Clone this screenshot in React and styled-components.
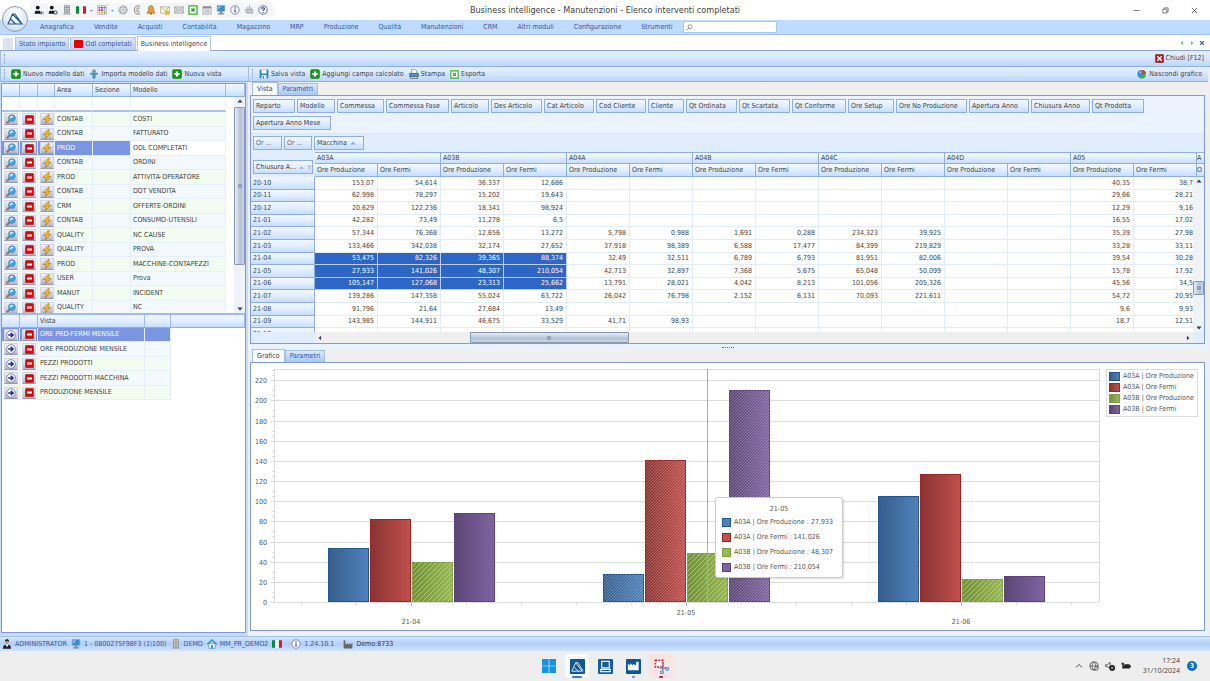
import { useState } from "react";
import styled, { createGlobalStyle, css } from "styled-components";

const GlobalStyle = createGlobalStyle`
  * {
    box-sizing: border-box;
  }

  body {
    margin: 0;
    background: #fff;
    color: #3f3f3f;
    font-family: "DejaVu Sans Condensed", "DejaVu Sans", "Noto Sans", sans-serif;
    font-size: 7px;
    line-height: 9px;
  }

  button, input {
    font: inherit;
    color: inherit;
    margin: 0;
    padding: 0;
    border: 0;
    background: none;
    outline: none;
  }

  svg {
    display: block;
    flex: none;
  }
`;

const headerGradient = "linear-gradient(#f3f8ff, #e3efff 45%, #c6deff)";
const barGradient = "linear-gradient(#e6f0ff, #d9e8ff 45%, #bad6fd)";

/* ---------- data ---------- */

const menuItems = [
  "Anagrafica", "Vendite", "Acquisti", "Contabilità", "Magazzino", "MRP", "Produzione",
  "Qualità", "Manutenzioni", "CRM", "Altri moduli", "Configurazione", "Strumenti",
];

const quickIcons = [
  "userDots", "userGear", "server", "flag", "caret", "palette", "caret", "gear", "coins", "bell",
  "mailStar", "mail", "excel", "calendar", "monitor", "info", "hand", "help",
];

const models = [
  ["CONTAB", "COSTI"],
  ["CONTAB", "FATTURATO"],
  ["PROD", "ODL COMPLETATI"],
  ["CONTAB", "ORDINI"],
  ["PROD", "ATTIVITA-OPERATORE"],
  ["CONTAB", "DDT VENDITA"],
  ["CRM", "OFFERTE-ORDINI"],
  ["CONTAB", "CONSUMO-UTENSILI"],
  ["QUALITY", "NC CAUSE"],
  ["QUALITY", "PROVA"],
  ["PROD", "MACCHINE-CONTAPEZZI"],
  ["USER", "Prova"],
  ["MANUT", "INCIDENT"],
  ["QUALITY", "NC"],
];

const views = [
  "ORE PRD-FERMI MENSILE",
  "ORE PRODUZIONE MENSILE",
  "PEZZI PRODOTTI",
  "PEZZI PRODOTTI MACCHINA",
  "PRODUZIONE MENSILE",
];

const fields = [
  ["Reparto", 42], ["Modello", 38], ["Commessa", 47], ["Commessa Fase", 63], ["Articolo", 38],
  ["Des Articolo", 51], ["Cat Articolo", 50], ["Cod Cliente", 50], ["Cliente", 36],
  ["Qt Ordinata", 51], ["Qt Scartata", 51], ["Qt Conforme", 54], ["Ore Setup", 46],
  ["Ore No Produzione", 71], ["Apertura Anno", 60], ["Chiusura Anno", 59], ["Qt Prodotta", 52],
  ["Apertura Anno Mese", 78],
];

const machines = ["A03A", "A03B", "A04A", "A04B", "A04C", "A04D", "A05"];

const pivot = [
  ["20-10", "153,07", "54,614", "36,337", "12,686", "", "", "", "", "", "", "", "", "40,35", "38,7"],
  ["20-11", "62,998", "78,297", "15,202", "19,643", "", "", "", "", "", "", "", "", "29,66", "28,21"],
  ["20-12", "20,629", "122,236", "18,341", "98,924", "", "", "", "", "", "", "", "", "12,29", "9,16"],
  ["21-01", "42,282", "73,49", "11,278", "6,5", "", "", "", "", "", "", "", "", "16,55", "17,02"],
  ["21-02", "57,344", "76,368", "12,656", "13,272", "5,798", "0,988", "1,691", "0,288", "234,323", "39,925", "", "", "35,39", "27,98"],
  ["21-03", "133,466", "342,038", "32,174", "27,652", "37,918", "98,389", "6,588", "17,477", "84,399", "219,829", "", "", "33,28", "33,11"],
  ["21-04", "53,475", "82,326", "39,365", "88,374", "32,49", "32,511", "6,789", "6,793", "81,951", "82,006", "", "", "39,54", "30,28"],
  ["21-05", "27,933", "141,026", "48,307", "210,054", "42,713", "32,897", "7,368", "5,675", "65,048", "50,099", "", "", "15,78", "17,92"],
  ["21-06", "105,147", "127,068", "23,313", "25,662", "13,791", "28,021", "4,042", "8,213", "101,056", "205,326", "", "", "45,56", "34,5"],
  ["21-07", "139,286", "147,358", "55,024", "63,722", "26,042", "76,798", "2,152", "6,131", "70,093", "221,611", "", "", "54,72", "20,95"],
  ["21-08", "91,796", "21,64", "27,684", "13,49", "", "", "", "", "", "", "", "", "9,6", "9,93"],
  ["21-09", "143,985", "144,911", "46,675", "33,529", "41,71", "98,93", "", "", "", "", "", "", "18,7", "12,51"],
  ["21-10", "", "", "", "", "", "", "", "", "", "", "", "", "", ""],
];

const selectedMonths = ["21-04", "21-05", "21-06"];

const series = [
  { id: "blue", label: "A03A | Ore Produzione", from: "#365f8a", to: "#4f81bd", edge: "#1f5796", values: [53.475, 27.933, 105.147] },
  { id: "red", label: "A03A | Ore Fermi", from: "#8a3432", to: "#c0504d", edge: "#9c2422", values: [82.326, 141.026, 127.068] },
  { id: "green", label: "A03B | Ore Produzione", from: "#71903a", to: "#98b955", edge: "#7f9f43", values: [39.365, 48.307, 23.313] },
  { id: "purple", label: "A03B | Ore Fermi", from: "#5b4675", to: "#8064a2", edge: "#5c4480", values: [88.374, 210.054, 25.662] },
];

/* ---------- icons ---------- */

const person = (
  <>
    <circle cx="6" cy="4" r="3" fill="#111" />
    <path d="M1 14c0-4 2-5 3.500-5.200L6 10.500l1.500-1.700C9 9 11 10 11 14z" fill="#111" />
  </>
);

const shapes = {
  userDots: <>{person}<path d="M12 10v5M14.500 11v4" stroke="#333" strokeWidth="1.500" strokeDasharray="2 1" /></>,
  userGear: <>{person}<circle cx="12" cy="12" r="2.600" fill="#fff" stroke="#333" strokeWidth="1.600" /></>,
  user: (
    <>
      <circle cx="8" cy="4.500" r="3.200" fill="#c98f5d" />
      <path d="M4.600 4.500C4.500 1 6 .5 8 .5s3.500.5 3.400 4L10.500 3h-5z" fill="#222" />
      <path d="M1.500 15.500c0-5 2-6 4-6.500l2.500 3 2.500-3c2 .5 4 1.500 4 6.500z" fill="#222" />
      <path d="M6.500 9h3L8 13z" fill="#fff" />
    </>
  ),
  server: (
    <>
      <path d="M4 1h8v12H4z" fill="#e5e8e2" stroke="#777" />
      <path d="M4 4h8M4 7h8M4 10h8M8 1v12M2 14.500h12" stroke="#777" />
    </>
  ),
  flag: (
    <>
      <path d="M0 2h5v12H0z" fill="#008c45" />
      <path d="M5 2h6v12H5z" fill="#fff" />
      <path d="M11 2h5v12h-5z" fill="#cd212a" />
    </>
  ),
  caret: <path d="M3 6h10l-5 6z" fill="#6c8fc4" />,
  palette: (
    <>
      <path d="M1 1h14v14H1z" fill="#fff" stroke="#9a9ac0" />
      <path d="M2.500 4h3M2.500 8h3" stroke="#e0362c" strokeWidth="2.800" />
      <path d="M6.500 4h3M10.500 4h3M6.500 8h3" stroke="#5a49c8" strokeWidth="2.800" />
      <path d="M2.500 12h3M6.500 12h3M10.500 8h3" stroke="#ecaa27" strokeWidth="2.800" />
      <path d="M10.500 12h3" stroke="#3aa53a" strokeWidth="2.800" />
    </>
  ),
  gear: (
    <>
      <circle cx="8" cy="8" r="6.500" fill="none" stroke="#999" strokeWidth="2" strokeDasharray="2.200 1.200" />
      <circle cx="8" cy="8" r="5" fill="#f4f4f4" stroke="#888" />
      <circle cx="8" cy="8" r="2" fill="#fff" stroke="#888" />
    </>
  ),
  coins: (
    <>
      <path d="M4 1h9v14H4z" fill="#e6e6df" />
      <path d="M13 1.500H7L4 5v6l3 3.500h6M12 5H9L7.500 8 9 11h3" fill="none" stroke="#8c8c80" strokeWidth="1.400" />
    </>
  ),
  bell: (
    <>
      <path d="M8 1c3 0 4 3 4 6 0 3 2 4 2.500 6h-13C2 11 4 10 4 7c0-3 1-6 4-6z" fill="#e0a13c" stroke="#9a6518" />
      <circle cx="8" cy="14" r="1.600" fill="#9a6518" />
    </>
  ),
  mail: (
    <>
      <path d="M1 3h14v10H1z" fill="#dcdcdc" stroke="#999" />
      <path d="M1 3l7 6 7-6M1 13l5-5M15 13l-5-5" fill="none" stroke="#999" />
    </>
  ),
  mailStar: (
    <>
      <path d="M1 3h14v10H1z" fill="#fbf6d8" stroke="#a39b6a" />
      <path d="M1 3l7 6 7-6" fill="none" stroke="#a39b6a" />
      <path d="M11.500 8l1 2.500 3 .5-2 2 .5 3-2.500-1.500L9 16l.5-3-2-2 3-.5z" fill="#f0c22d" stroke="#b8870c" strokeWidth=".5" />
    </>
  ),
  excel: (
    <>
      <path d="M1.500 1.500h13v13h-13z" fill="#fff" stroke="#33b51e" strokeWidth="2" />
      <path d="M5.500 5.500l5 5M10.500 5.500l-5 5" stroke="#1f9a14" strokeWidth="2" />
    </>
  ),
  calendar: (
    <>
      <path d="M1.500 2.500h13v12h-13z" fill="#efefef" stroke="#8f8f8f" />
      <path d="M1.500 2.500h13v3h-13z" fill="#8f8f8f" />
      <path d="M4 8h8M4 11h8M6 7v6M10 7v6" stroke="#aaa" />
    </>
  ),
  monitor: (
    <>
      <path d="M2 1h12v9H2z" fill="#2a8fd8" stroke="#8899a8" />
      <path d="M3.500 2.500h5l-5 5z" fill="#8fd0f7" />
      <path d="M6 10h4v3H6zM3 13h10v2H3z" fill="#7f8b96" />
    </>
  ),
  info: (
    <>
      <circle cx="8" cy="8" r="6.800" fill="#f4f6fb" stroke="#77809c" strokeWidth="1.300" />
      <path d="M8 7v5M8 3.500v2" stroke="#3b4894" strokeWidth="2" />
    </>
  ),
  help: (
    <>
      <circle cx="8" cy="8" r="6.800" fill="#f4f6fb" stroke="#555d78" strokeWidth="1.300" />
      <path d="M5.800 6.200C6 3.500 10.300 3.700 10.200 6.200 10.200 7.800 8 7.800 8 9.600M8 11v1.800" fill="none" stroke="#2d3f9c" strokeWidth="1.700" />
    </>
  ),
  hand: (
    <>
      <path d="M2 7h12v6H4z" fill="#c9c9c9" stroke="#999" />
      <path d="M6 8V3M9 8V1M11.500 8V4" stroke="#aaa" strokeWidth="1.600" />
    </>
  ),
  plus: (
    <>
      <rect x="1" y="1" width="14" height="14" rx="2" fill="#12a012" stroke="#0c750c" />
      <path d="M8 4v8M4 8h8" stroke="#fff" strokeWidth="3" />
    </>
  ),
  importModel: (
    <>
      <circle cx="8" cy="3.500" r="3" fill="#7d98a8" />
      <path d="M2 6h12v3h-3.500v5L8 16l-2.500-2V9H2z" fill="#4f8fb0" />
    </>
  ),
  save: (
    <>
      <path d="M1 1h14v14H1z" fill="#2d87c4" />
      <path d="M4 1h8v6H4zM4 9.500h8V15H4z" fill="#f4f9fd" />
      <path d="M6 11h2v4H6z" fill="#2d87c4" />
    </>
  ),
  printer: (
    <>
      <path d="M4 1h6l2 2v4H4z" fill="#fff" stroke="#777" />
      <path d="M1 7h14v5H1z" fill="#3c97d6" stroke="#39485a" />
      <path d="M3 12h10l1 3H2z" fill="#cfd6dd" stroke="#39485a" />
    </>
  ),
  close: (
    <>
      <path d="M1 1h14v14H1z" fill="#b5161a" stroke="#7c0a0d" />
      <path d="M4 4l8 8M12 4l-8 8" stroke="#fff" strokeWidth="3" />
    </>
  ),
  pie: (
    <>
      <circle cx="7" cy="8" r="6.500" fill="#3c8fd6" />
      <path d="M8 8V1.500A6.500 6.500 0 0 1 14.500 8z" fill="#df3a24" />
      <path d="M8 9h6.500A6.500 6.500 0 0 1 4 14z" fill="#3cb62c" />
      <path d="M3 6l3-3 1 3z" fill="#b8dcf7" />
    </>
  ),
  lens: (
    <>
      <path d="M1.500 14.500l5-5" stroke="#8a6b52" strokeWidth="3" />
      <circle cx="9.500" cy="6.500" r="5.500" fill="#35a7ef" stroke="#4d7fae" />
      <path d="M6 5.500C7 2.500 10 2 12 3.500 12 6 8 5 7 8z" fill="#d9f2ff" />
    </>
  ),
  minus: (
    <>
      <rect x="1" y="1" width="14" height="14" rx="1" fill="#cc0f12" stroke="#8e0a0c" />
      <path d="M3.500 8h9" stroke="#fff" strokeWidth="3.500" />
    </>
  ),
  bolt: <path d="M10 .5L1.500 9H7l-2 6.500L14.500 7H9l3-5.500z" fill="#f8c323" stroke="#8f6412" strokeWidth=".9" />,
  arrow: (
    <>
      <circle cx="8" cy="8" r="7" fill="#f7f8ff" stroke="#6a7090" strokeWidth="1.200" />
      <path d="M3.500 8h7M7.500 4.500L11.500 8l-4 3.500" fill="none" stroke="#1c2a9c" strokeWidth="2.200" />
    </>
  ),
  house: (
    <>
      <path d="M3 7h10v8H3z" fill="#e6f4fb" stroke="#4889ac" />
      <path d="M.5 8.500L8 1.500l7.500 7" fill="none" stroke="#2a92cc" strokeWidth="2.200" />
      <path d="M6.500 10h3v5h-3z" fill="#2a92cc" />
    </>
  ),
  factory: <path d="M1 15V2h2.500l.6 7L8 6.500V9l3.500-2.500V9L15 6.500V15z" fill="#666" />,
  search: (
    <>
      <circle cx="9.500" cy="6" r="4.500" fill="none" stroke="#555" strokeWidth="1.300" />
      <path d="M6 9.500l-5 5" stroke="#555" strokeWidth="1.600" />
    </>
  ),
  minimize: <path d="M1 8h14" stroke="#444" strokeWidth="1.500" />,
  restore: <path d="M2 5h9v9H2zM5 5V2h9v9h-3" fill="none" stroke="#444" strokeWidth="1.500" />,
  cross: <path d="M2 2l12 12M14 2L2 14" stroke="#333" strokeWidth="1.600" />,
  crossBold: <path d="M3 3l10 10M13 3L3 13" stroke="#2f62a8" strokeWidth="3.500" />,
  left: <path d="M11 2v12L4 8z" fill="currentColor" />,
  right: <path d="M5 2v12l7-6z" fill="currentColor" />,
  up: <path d="M1 12h14L8 4z" fill="currentColor" />,
  down: <path d="M1 4h14l-7 8z" fill="currentColor" />,
  funnel: <path d="M2 2h12L9.500 8v6l-3-2V8z" fill="#c3cfdf" stroke="#7f8ea8" />,
  windows: <path d="M0 0h7.600v7.600H0zM8.400 0H16v7.600H8.400zM0 8.400h7.600V16H0zM8.400 8.400H16V16H8.400z" fill="#1494df" />,
  appLogo: (
    <>
      <rect width="16" height="16" rx="1" fill="#0f5796" />
      <path d="M2 13L6 4l7 9zM6 4h2.500L14 13M4.500 9L9 13" fill="none" stroke="#fff" strokeWidth=".9" />
    </>
  ),
  appScreen: (
    <>
      <rect width="16" height="16" rx="1" fill="#14609f" />
      <path d="M4 2.500h8v7H4z" fill="none" stroke="#fff" strokeWidth="1.200" />
      <path d="M3 11h10v2.500H3z" fill="none" stroke="#fff" strokeWidth="1.200" />
    </>
  ),
  appFactory: (
    <>
      <rect width="16" height="16" rx="1" fill="#0c5796" />
      <path d="M2 12V5l2.500 2V4.500L7.500 7V5l3 2L11 3h2.500v9z" fill="#fff" />
    </>
  ),
  snip: (
    <>
      <path d="M1.500 1.500h8v7h-8z" fill="#fff" stroke="#d2232a" strokeWidth="1.800" strokeDasharray="2 1.200" />
      <path d="M9.500 4v8M6 9.500h7" stroke="#7b8794" strokeWidth="1.600" />
      <circle cx="14" cy="10.500" r="1.500" fill="none" stroke="#2a8fd8" strokeWidth="1.200" />
      <circle cx="8.500" cy="14" r="1.500" fill="none" stroke="#2a8fd8" strokeWidth="1.200" />
    </>
  ),
  chevron: <path d="M2 11l6-6 6 6" fill="none" stroke="#333" strokeWidth="1.700" />,
  globe: (
    <>
      <circle cx="8" cy="8" r="6.500" fill="none" stroke="#333" strokeWidth="1.200" />
      <path d="M1.500 8h13M8 1.500C4 5 4 11 8 14.500M8 1.500c4 3.500 4 9.500 0 13" fill="none" stroke="#333" />
      <circle cx="12" cy="12" r="3" fill="#eee" stroke="#333" />
      <path d="M10 14l4-4" stroke="#333" />
    </>
  ),
  speaker: (
    <>
      <path d="M1 6h3l4-4v10L4 9H1z" fill="none" stroke="#333" strokeWidth="1.200" />
      <circle cx="11.500" cy="11" r="4.500" fill="#111" />
      <path d="M9.500 9l4 4M13.500 9l-4 4" stroke="#fff" strokeWidth="1.100" />
    </>
  ),
  battery: (
    <>
      <path d="M2 5h12v7H2zM14 7h2v3h-2z" fill="#222" />
      <path d="M0 3l4-1 2 4-4 2z" fill="#222" stroke="#eee" strokeWidth=".7" />
    </>
  ),
};

function Icon({ name, size = 10 }) {
  return (
    <svg width={size} height={size} viewBox="0 0 16 16" aria-hidden="true">
      {shapes[name]}
    </svg>
  );
}

/* ---------- window frame ---------- */

const Window = styled.div`
  display: flex;
  flex-direction: column;
  min-height: 100vh;
`;

const TitleBar = styled.header`
  position: relative;
  display: flex;
  align-items: center;
  height: 20px;
  padding: 0 12px 0 30px;
`;

const AppButton = styled.button`
  position: absolute;
  z-index: 2;
  left: 2px;
  top: 6px;
  display: flex;
  align-items: center;
  justify-content: center;
  width: 26px;
  height: 26px;
  border: 1px solid #8d9fb8;
  border-radius: 50%;
  background: radial-gradient(circle at 50% 30%, #fff, #dfe9f6 60%, #b4cbe8);
`;

const QuickBar = styled.div`
  display: flex;
  align-items: center;
  gap: 4px;
  height: 15px;
  padding: 0 7px 0 4px;
  border-radius: 0 8px 8px 0;
  background: #f3f6fb;
`;

const QuickButton = styled.button`
  width: ${(props) => (props.$narrow ? 3 : 10)}px;
  height: 10px;
  display: flex;
  align-items: center;
  justify-content: center;
`;

const Title = styled.h1`
  position: absolute;
  left: 0;
  right: 0;
  margin: 0;
  font-size: 9px;
  font-weight: 400;
  line-height: 20px;
  text-align: center;
  pointer-events: none;
`;

const WindowButtons = styled.div`
  display: flex;
  gap: 22px;
  margin-left: auto;
`;

const MenuBar = styled.nav`
  display: flex;
  align-items: center;
  height: 15px;
  padding-left: 30px;
  background: #bfdbff;
  border-bottom: 1px solid #a0c3f5;
  color: #34589f;
`;

const MenuButton = styled.button`
  padding: 0 10px;
  line-height: 14px;
`;

const SearchBox = styled.label`
  display: flex;
  align-items: center;
  width: 94px;
  height: 12px;
  padding-left: 2px;
  background: #fff;
  border: 1px solid #a9c8f0;

  input {
    width: 80px;
  }
`;

const PageTabs = styled.div`
  display: flex;
  align-items: flex-end;
  gap: 1px;
  height: 16px;
  padding: 0 5px 0 3px;
  border-bottom: 1px solid #8ba8d8;
`;

const PageTab = styled.button`
  display: flex;
  align-items: center;
  gap: 2px;
  height: ${(props) => (props.$active ? 15 : 13)}px;
  margin-bottom: ${(props) => (props.$active ? -1 : 0)}px;
  padding: 0 3px;
  border: 1px solid #b3c9e8;
  border-bottom: 0;
  background: ${(props) => (props.$active ? "#fff" : "linear-gradient(#dbe8fa, #b5cff5)")};
  color: ${(props) => (props.$active ? "#3f3f3f" : "#34589f")};
`;

const EmptyTab = styled.span`
  width: 10px;
  height: 12px;
  margin-right: 1px;
  background: #dfe4ec;
`;

const RedSquare = styled.i`
  width: 9px;
  height: 8px;
  border-radius: 1px;
  background: #e80000;
`;

const TabTools = styled.div`
  display: flex;
  align-self: center;
  gap: 4px;
  margin-left: auto;
  color: #8ba8d8;
`;

const Bar = styled.div`
  display: flex;
  align-items: center;
  gap: ${(props) => props.$gap || 6}px;
  height: ${(props) => (props.$tall ? 16 : 15)}px;
  padding: 0 6px 0 8px;
  background: ${barGradient};
  border-bottom: 1px solid #90b0e3;
  border-left: 1px solid #a5c0e8;
`;

const Grip = styled.i`
  width: 2px;
  height: 10px;
  margin-left: -5px;
  border-left: 1px dotted #7f9fd4;
`;

const ToolButton = styled.button`
  display: flex;
  align-items: center;
  gap: 2px;
  margin-left: ${(props) => (props.$end ? "auto" : 0)};
  white-space: nowrap;
`;

const Workspace = styled.main`
  display: flex;
  flex: 1;
  min-height: 0;
`;

/* ---------- left side ---------- */

const Side = styled.aside`
  display: flex;
  flex-direction: column;
  width: 248px;
  flex: none;
  background: #c7dcfa;
`;

const SidePanel = styled.section`
  display: flex;
  flex: 1;
  flex-direction: column;
  margin: 1px 2px 3px 1px;
  border: 1px solid #7d9cd3;
  background: #fff;
`;

const ModelPane = styled.div`
  height: 231px;
  overflow: hidden;
  border-bottom: 2px solid #9dbbe8;
`;

const PaneBody = styled.div`
  display: flex;
  justify-content: space-between;
  height: ${(props) => props.$height}px;
  overflow: hidden;
`;

const SideTable = styled.table`
  border-collapse: separate;
  border-spacing: 0;
  table-layout: fixed;
  width: ${(props) => props.$width};

  th {
    height: 13px;
    padding: 0 2px;
    text-align: left;
    font-weight: 400;
    background: ${headerGradient};
    border-right: 1px solid #9ebbe5;
    border-bottom: 1px solid #8eafe0;
  }

  td {
    padding: 0 2px;
    overflow: hidden;
    white-space: nowrap;
    border-right: 1px solid #e6f0fc;
    border-bottom: 1px solid #e6f0fc;
  }

  input {
    display: block;
    width: 100%;
  }
`;

const FilterRow = styled.tr`
  height: 15px;

  td {
    border-bottom: 2px solid #a9c4ec;
  }
`;

const SideRow = styled.tr`
  height: ${(props) => (props.$index % 2 ? 14 : 15)}px;
  background: ${(props) => (props.$green ? "#f3fcf1" : "#f4f9ff")};

  ${(props) =>
    props.$selected &&
    css`
      td {
        background: #7b96e0;
        color: #fff;
      }

      td:nth-child(6) {
        background: #fff;
        color: #3f3f3f;
      }
    `}
`;

const ActionCell = styled.td`
  && {
    padding: 0 0 0 2px;
  }
`;

const ActionButton = styled.button`
  display: flex;
  align-items: center;
  justify-content: center;
  width: 14px;
  height: 12px;
  background: linear-gradient(#f0f0f7, #d0d0df 60%, #b3b3c6);
  border: 1px solid #d4d4e2;
  border-bottom-color: #9a9ab0;
`;

/* ---------- scroll bars ---------- */

const VScroll = styled.div`
  display: flex;
  flex: none;
  flex-direction: column;
  align-items: center;
  justify-content: space-between;
  width: 11px;
  padding: 1px 0;
  background: #eff2f6;
  color: #2c3f66;
`;

const HScroll = styled.div`
  display: flex;
  align-items: center;
  justify-content: space-between;
  height: 11px;
  margin: 0 11px 0 64px;
  padding: 0 2px;
  background: #efefef;
  color: #2c3f66;
`;

const ScrollTrack = styled.div`
  flex: 1;
  display: flex;
  flex-direction: ${(props) => (props.$vertical ? "column" : "row")};
  align-self: stretch;
`;

const Thumb = styled.div`
  flex: 0 0 ${(props) => props.$size};
  margin: ${(props) => (props.$vertical ? `${props.$before} 0 0 0` : `0 0 0 ${props.$before}`)};
  display: flex;
  align-items: center;
  justify-content: center;
  border: 1px solid #8797b5;
  border-radius: 1px;
  background: linear-gradient(${(props) => (props.$vertical ? "to right" : "to bottom")}, #e7edf5, #b4c2d6 60%, #c9d6e8);

  &::after {
    content: "";
    width: 4px;
    height: 4px;
    background: #93a3bb;
  }
`;

/* ---------- right side ---------- */

const Content = styled.section`
  display: flex;
  flex: 1;
  flex-direction: column;
  min-width: 0;
  padding-right: 2px;
  background: #efefef;
`;

const Splitter = styled.div`
  display: flex;
  justify-content: center;
  height: 5px;
  padding-top: 3px;
  background: #e9f2ff;

  i {
    width: 12px;
    border-top: 1px dotted #4c6ba8;
  }
`;

const ViewTabs = styled.div`
  display: flex;
  align-items: flex-end;
  height: 13px;
  padding-left: 4px;
`;

const ViewTab = styled.button`
  height: ${(props) => (props.$active ? 13 : 12)}px;
  padding: 0 4px;
  border: 1px solid #a5bfe6;
  border-bottom: 0;
  background: ${(props) => (props.$active ? "#f7faff" : "linear-gradient(#dae7fa, #a9c8f5)")};
  color: ${(props) => (props.$active ? "#3f3f3f" : "#34589f")};
`;

const Panel = styled.div`
  display: flex;
  flex: ${(props) => (props.$grow ? 1 : "none")};
  flex-direction: column;
  margin: 0 3px 0 2px;
  border: 1px solid #7d9cd3;
  background: ${(props) => (props.$grow ? "#fff" : "#e0edff")};
`;

const FieldArea = styled.div`
  display: flex;
  flex-wrap: wrap;
  gap: 3px 2px;
  padding: 3px 2px;
  background: #ebf3ff;
  border-bottom: 1px solid #dce8f8;
`;

const Chip = styled.button`
  display: flex;
  align-items: center;
  gap: 3px;
  width: ${(props) => props.$width}px;
  height: 14px;
  padding: 0 2px;
  border: 1px solid #8eafe0;
  background: ${headerGradient};
  white-space: nowrap;
  color: ${(props) => (props.$muted ? "#666" : "inherit")};

  svg {
    color: #7fb0ee;
  }
`;

const AxisRow = styled.div`
  display: flex;
  gap: 2px;
  padding: 2px 2px;
`;

const PivotHead = styled.div`
  overflow: hidden;
`;

const PivotBody = styled.div`
  display: flex;
  height: 155px;

  > div:first-child {
    flex: 1;
    overflow: hidden;
  }
`;

const PivotTable = styled.table`
  table-layout: fixed;
  border-collapse: separate;
  border-spacing: 0;
  width: 100%;

  col {
    width: 63px;
  }

  col:first-child {
    width: 64px;
  }

  col:last-child {
    width: auto;
  }

  th {
    padding: 0 0 0 2px;
    text-align: left;
    font-weight: 400;
    background: ${headerGradient};
    border-right: 1px solid #8eafe0;
    border-bottom: 1px solid #8eafe0;
    white-space: nowrap;
  }

  thead th {
    height: 12px;
    border-top: 1px solid #8eafe0;
  }

  thead th:last-child {
    padding: 0;
    border-right: 0;
  }

  thead tr + tr th {
    height: 13px;
    border-top: 0;
  }

  thead th:first-child[rowspan] {
    padding: 8px 0 0 2px;
    border: 0;
    background: none;
    vertical-align: top;
  }

  tbody th {
    color: #3a4963;
  }

  td {
    padding: 0 3px 0 0;
    text-align: right;
    background: #fff;
    border-right: 1px solid #e1edfc;
    border-bottom: 1px solid #e1edfc;
  }
`;

const PivotRow = styled.tr`
  height: ${(props) => (props.$index % 5 === 1 || props.$index % 5 === 3 ? 12 : 13)}px;
`;

const ValueCell = styled.td`
  ${(props) =>
    props.$selected &&
    css`
      && {
        background: #2e66c6;
        color: #fff;
        border-color: #b9d0f3;
      }
    `}
`;

/* ---------- chart ---------- */

const ChartArea = styled.div`
  position: relative;
  display: flex;
  align-items: flex-start;
  flex: 1;
  color: #555;
`;

const ChartSvg = styled.svg`
  flex: 1;
  min-width: 0;
  height: auto;

  text {
    font-size: 7px;
    fill: #555;
  }
`;

const Legend = styled.ul`
  width: 92px;
  margin: 6px 6px 0 0;
  padding: 1px 2px;
  list-style: none;
  border: 1px solid #ddd;

  li {
    display: flex;
    align-items: center;
    gap: 3px;
    height: 11px;
    white-space: nowrap;
  }
`;

const Tooltip = styled.div`
  position: absolute;
  left: 464px;
  top: 134px;
  width: 128px;
  height: 81px;
  padding: 5px 6px;
  background: #fff;
  border: 1px solid #ccc;
  border-radius: 3px;
  box-shadow: 1px 1px 2px rgba(0, 0, 0, 0.15);

  h2 {
    margin: 0;
    font-size: 7px;
    font-weight: 400;
    line-height: 12px;
    text-align: center;
  }

  p {
    display: flex;
    align-items: center;
    gap: 3px;
    height: 15px;
    margin: 0;
    white-space: nowrap;
  }
`;

const Swatch = styled.i`
  width: ${(props) => (props.$wide ? 11 : 9)}px;
  height: ${(props) => (props.$wide ? 9 : 9)}px;
  flex: none;
  border: 1px solid ${(props) => props.$series.edge};
  background: ${(props) =>
    props.$wide ? `linear-gradient(to right, ${props.$series.from}, ${props.$series.to})` : props.$series.to};
`;

/* ---------- bottom ---------- */

const StatusBar = styled.footer`
  display: flex;
  align-items: center;
  gap: 4px;
  height: 15px;
  padding: 0 2px;
  border-top: 1px solid #a8bfe2;
  background: linear-gradient(#d4e5fc, #b1cff7 50%, #d2e3fb);
  color: #34589f;
`;

const StatusItem = styled.span`
  display: flex;
  align-items: center;
  gap: 3px;
  padding-right: ${(props) => (props.$wide ? 5 : 0)}px;
  color: ${(props) => (props.$dark ? "#333" : "inherit")};
`;

const TaskBar = styled.footer`
  position: relative;
  display: flex;
  align-items: center;
  justify-content: center;
  gap: 4px;
  height: 30px;
  background: #eeeeef;
`;

const TaskButton = styled.button`
  position: relative;
  display: flex;
  align-items: center;
  justify-content: center;
  width: 24px;
  height: 24px;
  border-radius: 2px;
  background: ${(props) => props.$tile || "none"};

  &::after {
    content: "";
    position: absolute;
    bottom: 0;
    width: ${(props) => props.$mark || 0}px;
    height: 2px;
    border-radius: 1px;
    background: ${(props) => props.$markColor};
  }
`;

const Tray = styled.div`
  position: absolute;
  right: 13px;
  display: flex;
  align-items: center;
  gap: 6px;
`;

const Clock = styled.time`
  margin: 0 1px 0 6px;
  text-align: right;
  font-family: "Open Sans", sans-serif;
  line-height: 10px;
`;

const Badge = styled.span`
  width: 10px;
  height: 10px;
  border-radius: 50%;
  background: #0a6ccf;
  color: #fff;
  font-weight: 700;
  line-height: 10px;
  text-align: center;
`;

/* ---------- components ---------- */

function ScrollV({ before, size }) {
  return (
    <VScroll>
      <Icon name="up" size={6} />
      <ScrollTrack $vertical>
        <Thumb $vertical $before={before} $size={size} />
      </ScrollTrack>
      <Icon name="down" size={6} />
    </VScroll>
  );
}

function Models() {
  const [selected, setSelected] = useState(2);

  return (
    <ModelPane>
      <SideTable $width="100%">
        <colgroup>
          <col width="18" />
          <col width="18" />
          <col width="17" />
          <col width="38" />
          <col width="38" />
          <col width="95" />
          <col />
        </colgroup>
        <thead>
          <tr>
            <th />
            <th />
            <th />
            <th>Area</th>
            <th>Sezione</th>
            <th>Modello</th>
            <th />
          </tr>
        </thead>
      </SideTable>
      <PaneBody $height={216}>
        <SideTable $width="224px">
          <colgroup>
            <col width="18" />
            <col width="18" />
            <col width="17" />
            <col width="38" />
            <col width="38" />
            <col width="95" />
          </colgroup>
          <tbody>
            <FilterRow>
              <td />
              <td />
              <td />
              <td><input aria-label="Filtro area" /></td>
              <td><input aria-label="Filtro sezione" /></td>
              <td><input aria-label="Filtro modello" /></td>
            </FilterRow>
            {models.map(([area, name], index) => (
              <SideRow
                key={name}
                $index={index}
                $green={index % 2 === 0}
                $selected={index === selected}
                onClick={() => setSelected(index)}
              >
                <ActionCell><ActionButton aria-label="Apri"><Icon name="lens" size={10} /></ActionButton></ActionCell>
                <ActionCell><ActionButton aria-label="Elimina"><Icon name="minus" size={9} /></ActionButton></ActionCell>
                <ActionCell><ActionButton aria-label="Esegui"><Icon name="bolt" size={10} /></ActionButton></ActionCell>
                <td>{area}</td>
                <td />
                <td>{name}</td>
              </SideRow>
            ))}
          </tbody>
        </SideTable>
        <ScrollV before="3px" size="158px" />
      </PaneBody>
    </ModelPane>
  );
}

function Views() {
  const [selected, setSelected] = useState(0);

  return (
    <>
      <SideTable $width="100%">
        <colgroup>
          <col width="18" />
          <col width="18" />
          <col width="107" />
          <col width="26" />
          <col />
        </colgroup>
        <thead>
          <tr>
            <th />
            <th />
            <th>Vista</th>
            <th />
            <th />
          </tr>
        </thead>
      </SideTable>
      <SideTable $width="169px">
        <colgroup>
          <col width="18" />
          <col width="18" />
          <col width="107" />
          <col width="26" />
        </colgroup>
        <tbody>
          {views.map((view, index) => (
            <SideRow
              key={view}
              $index={index + 1}
              $green={index > 0 && index % 2 === 0}
              $selected={index === selected}
              onClick={() => setSelected(index)}
            >
              <ActionCell><ActionButton aria-label="Apri vista"><Icon name="arrow" size={10} /></ActionButton></ActionCell>
              <ActionCell><ActionButton aria-label="Elimina vista"><Icon name="minus" size={9} /></ActionButton></ActionCell>
              <td>{view}</td>
              <td />
            </SideRow>
          ))}
        </tbody>
      </SideTable>
    </>
  );
}

function PivotColumns() {
  return (
    <colgroup>
      <col />
      {machines.map((machine) => [<col key={machine} />, <col key={machine + "f"} />])}
      <col />
    </colgroup>
  );
}

function Pivot() {
  return (
    <Panel>
      <FieldArea>
        {fields.map(([name, width]) => (
          <Chip key={name} $width={width}>{name}</Chip>
        ))}
      </FieldArea>
      <AxisRow>
        <Chip $width={29} $muted>Or ...</Chip>
        <Chip $width={28} $muted>Or ...</Chip>
        <Chip $width={50}>Macchina <Icon name="up" size={6} /></Chip>
      </AxisRow>
      <PivotHead>
        <PivotTable>
          <PivotColumns />
          <thead>
            <tr>
              <th rowSpan={2}>
                <Chip $width={60}>Chiusura A... <Icon name="up" size={5} /><Icon name="funnel" size={5} /></Chip>
              </th>
              {machines.map((machine) => (
                <th key={machine} colSpan={2}>{machine}</th>
              ))}
              <th>A</th>
            </tr>
            <tr>
              {machines.map((machine) => [
                <th key={machine}>Ore Produzione</th>,
                <th key={machine + "f"}>Ore Fermi</th>,
              ])}
              <th>O</th>
            </tr>
          </thead>
        </PivotTable>
      </PivotHead>
      <PivotBody>
        <div>
          <PivotTable>
            <PivotColumns />
            <tbody>
              {pivot.map(([month, ...values], index) => (
                <PivotRow key={month} $index={index}>
                  <th>{month}</th>
                  {values.map((value, i) => (
                    <ValueCell key={i} $selected={i < 4 && selectedMonths.includes(month)}>{value}</ValueCell>
                  ))}
                  <td />
                </PivotRow>
              ))}
            </tbody>
          </PivotTable>
        </div>
        <ScrollV before="97px" size="14px" />
      </PivotBody>
      <HScroll>
        <Icon name="left" size={6} />
        <ScrollTrack>
          <Thumb $before="17%" $size="159px" />
        </ScrollTrack>
        <Icon name="right" size={6} />
      </HScroll>
    </Panel>
  );
}

const PLOT = { left: 23, right: 848, top: 6, bottom: 239 };
const yOf = (value) => Math.round(PLOT.bottom - value * 1.008);

function Chart() {
  const ticks = Array.from({ length: 12 }, (_, i) => i * 20);

  return (
    <ChartArea>
      <ChartSvg viewBox="0 0 855 266" role="img" aria-label="Ore per mese">
        <defs>
          {series.map((s) => (
            <linearGradient key={s.id} id={s.id}>
              <stop offset="0" stopColor={s.from} />
              <stop offset="1" stopColor={s.to} />
            </linearGradient>
          ))}
          <pattern id="stripes" width="5" height="5" patternUnits="userSpaceOnUse">
            <path d="M-1 6L6-1M-1 1l2-2M4 6l2-2" stroke="#cfe59a" strokeWidth="1" opacity=".6" />
          </pattern>
          <pattern id="hatch" width="3" height="3" patternUnits="userSpaceOnUse">
            <path d="M-1 4L4-1M-1 1l2-2M2 4l2-2" stroke="#fff" strokeWidth="1" opacity=".24" />
          </pattern>
        </defs>
        <g fill="none" stroke="#dcdcdc" shapeRendering="crispEdges">
          {ticks.map((tick) => (
            <path key={tick} d={`M${PLOT.left - 3} ${yOf(tick) + 0.5}H${PLOT.right}`} />
          ))}
          {ticks.map((tick) => (
            <path key={tick} d={`M${PLOT.left - 2} ${yOf(tick + 5) + 0.5}h2M${PLOT.left - 2} ${yOf(tick + 10) + 0.5}h2`} />
          ))}
          <path d={`M${PLOT.left + 0.5} ${PLOT.bottom}V${PLOT.top + 0.5}H${PLOT.right + 0.5}V${PLOT.bottom}`} />
          {[50, 105, 215, 270, 325, 380, 490, 545, 600, 655, 765, 820].map((x) => (
            <path key={x} d={`M${x + 0.5} ${PLOT.bottom}v3`} />
          ))}
        </g>
        {ticks.map((tick) => (
          <text key={tick} x="16" y={yOf(tick) + 3} textAnchor="end">{tick}</text>
        ))}
        {["21-04", "21-05", "21-06"].map((month, group) => {
          const center = 160 + group * 275;
          return (
            <g key={month}>
              <path d={`M${center + 0.5} ${PLOT.bottom}v4`} stroke="#bbb" />
              <text x={center} y={group === 1 ? 252 : 261} textAnchor="middle">{month}</text>
              {series.map((s, i) => {
                const top = yOf(s.values[group]) + 0.5;
                const box = {
                  x: center - 82.5 + i * 42,
                  y: top,
                  width: 40,
                  height: PLOT.bottom - top - 0.5,
                };
                return (
                  <g key={s.id}>
                    <rect {...box} fill={`url(#${s.id})`} stroke={s.edge} strokeWidth="1" />
                    {s.id === "green" && <rect {...box} fill="url(#stripes)" />}
                    {group === 1 && s.id !== "green" && <rect {...box} fill="url(#hatch)" />}
                  </g>
                );
              })}
            </g>
          );
        })}
        <path d={`M456.500 ${PLOT.top}V${PLOT.bottom}`} stroke="#b9a3b5" />
      </ChartSvg>
      <Legend>
        {series.map((s) => (
          <li key={s.id}><Swatch $series={s} $wide />{s.label}</li>
        ))}
      </Legend>
      <Tooltip role="tooltip">
        <h2>21-05</h2>
        {series.map((s) => (
          <p key={s.id}>
            <Swatch $series={s} />
            {s.label} : {s.values[1].toFixed(3).replace(".", ",")}
          </p>
        ))}
      </Tooltip>
    </ChartArea>
  );
}

export default function App() {
  const [search, setSearch] = useState("");

  return (
    <Window>
      <GlobalStyle />
      <TitleBar>
        <AppButton aria-label="Menu applicazione">
          <svg width="18" height="18" viewBox="0 0 18 18">
            <path d="M2 14L6.500 4 16 14zM6.500 4h2.500L16 14M4.500 9l5 5" fill="none" stroke="#1c5b9c" strokeWidth="1.200" />
          </svg>
        </AppButton>
        <QuickBar>
          {quickIcons.map((name, i) => (
            <QuickButton key={i} aria-label={name} $narrow={name === "caret"}>
              <Icon name={name} size={name === "caret" ? 5 : 10} />
            </QuickButton>
          ))}
        </QuickBar>
        <Title>Business intelligence - Manutenzioni - Elenco interventi completati</Title>
        <WindowButtons>
          <button aria-label="Riduci"><Icon name="minimize" size={7} /></button>
          <button aria-label="Ripristina"><Icon name="restore" size={7} /></button>
          <button aria-label="Chiudi"><Icon name="cross" size={7} /></button>
        </WindowButtons>
      </TitleBar>
      <MenuBar>
        {menuItems.map((item) => (
          <MenuButton key={item}>{item}</MenuButton>
        ))}
        <SearchBox>
          <Icon name="search" size={7} />
          <input aria-label="Cerca" value={search} onChange={(e) => setSearch(e.target.value)} />
        </SearchBox>
      </MenuBar>
      <PageTabs>
        <EmptyTab />
        <PageTab>Stato impianto</PageTab>
        <PageTab><RedSquare />Odl completati</PageTab>
        <PageTab $active>Business intelligence</PageTab>
        <TabTools>
          <Icon name="left" size={6} />
          <Icon name="right" size={6} />
          <button aria-label="Chiudi scheda"><Icon name="crossBold" size={6} /></button>
        </TabTools>
      </PageTabs>
      <Bar $tall>
        <Grip />
        <ToolButton $end><Icon name="close" size={9} />Chiudi [F12]</ToolButton>
      </Bar>
      <Workspace>
        <Side>
          <Bar $gap={5}>
            <Grip />
            <ToolButton><Icon name="plus" />Nuovo modello dati</ToolButton>
            <ToolButton><Icon name="importModel" />Importa modello dati</ToolButton>
            <ToolButton><Icon name="plus" />Nuova vista</ToolButton>
          </Bar>
          <SidePanel>
            <Models />
            <Views />
          </SidePanel>
        </Side>
        <Content>
          <Bar $gap={5}>
            <Grip />
            <ToolButton><Icon name="save" />Salva vista</ToolButton>
            <ToolButton><Icon name="plus" />Aggiungi campo calcolato</ToolButton>
            <ToolButton><Icon name="printer" />Stampa</ToolButton>
            <ToolButton><Icon name="excel" size={9} />Esporta</ToolButton>
            <ToolButton $end><Icon name="pie" />Nascondi grafico</ToolButton>
          </Bar>
          <ViewTabs>
            <ViewTab $active>Vista</ViewTab>
            <ViewTab>Parametri</ViewTab>
          </ViewTabs>
          <Pivot />
          <Splitter><i /></Splitter>
          <ViewTabs>
            <ViewTab $active>Grafico</ViewTab>
            <ViewTab>Parametri</ViewTab>
          </ViewTabs>
          <Panel $grow>
            <Chart />
          </Panel>
          <Splitter />
        </Content>
      </Workspace>
      <StatusBar>
        <StatusItem><Icon name="user" />ADMINISTRATOR</StatusItem>
        <StatusItem><Icon name="monitor" />1 - 0800275F98F3 (1\100)</StatusItem>
        <StatusItem><Icon name="server" />DEMO</StatusItem>
        <StatusItem><Icon name="house" />MM_PR_DEMO2</StatusItem>
        <StatusItem $wide><Icon name="flag" /></StatusItem>
        <StatusItem $wide><Icon name="info" />1.24.10.1</StatusItem>
        <StatusItem $dark><Icon name="factory" />Demo:8733</StatusItem>
      </StatusBar>
      <TaskBar>
        <TaskButton aria-label="Start"><Icon name="windows" size={14} /></TaskButton>
        <TaskButton aria-label="Gestionale" $tile="#fafafa" $mark={10} $markColor="#2f7bd6"><Icon name="appLogo" size={15} /></TaskButton>
        <TaskButton aria-label="Terminale"><Icon name="appScreen" size={15} /></TaskButton>
        <TaskButton aria-label="Fabbrica" $mark={3} $markColor="#888"><Icon name="appFactory" size={15} /></TaskButton>
        <TaskButton aria-label="Cattura" $tile="#fbe3e4" $mark={4} $markColor="#c22"><Icon name="snip" size={15} /></TaskButton>
        <Tray>
          <Icon name="chevron" size={8} />
          <Icon name="globe" />
          <Icon name="speaker" />
          <Icon name="battery" />
          <Clock>17:24<br />31/10/2024</Clock>
          <Badge>3</Badge>
        </Tray>
      </TaskBar>
    </Window>
  );
}
